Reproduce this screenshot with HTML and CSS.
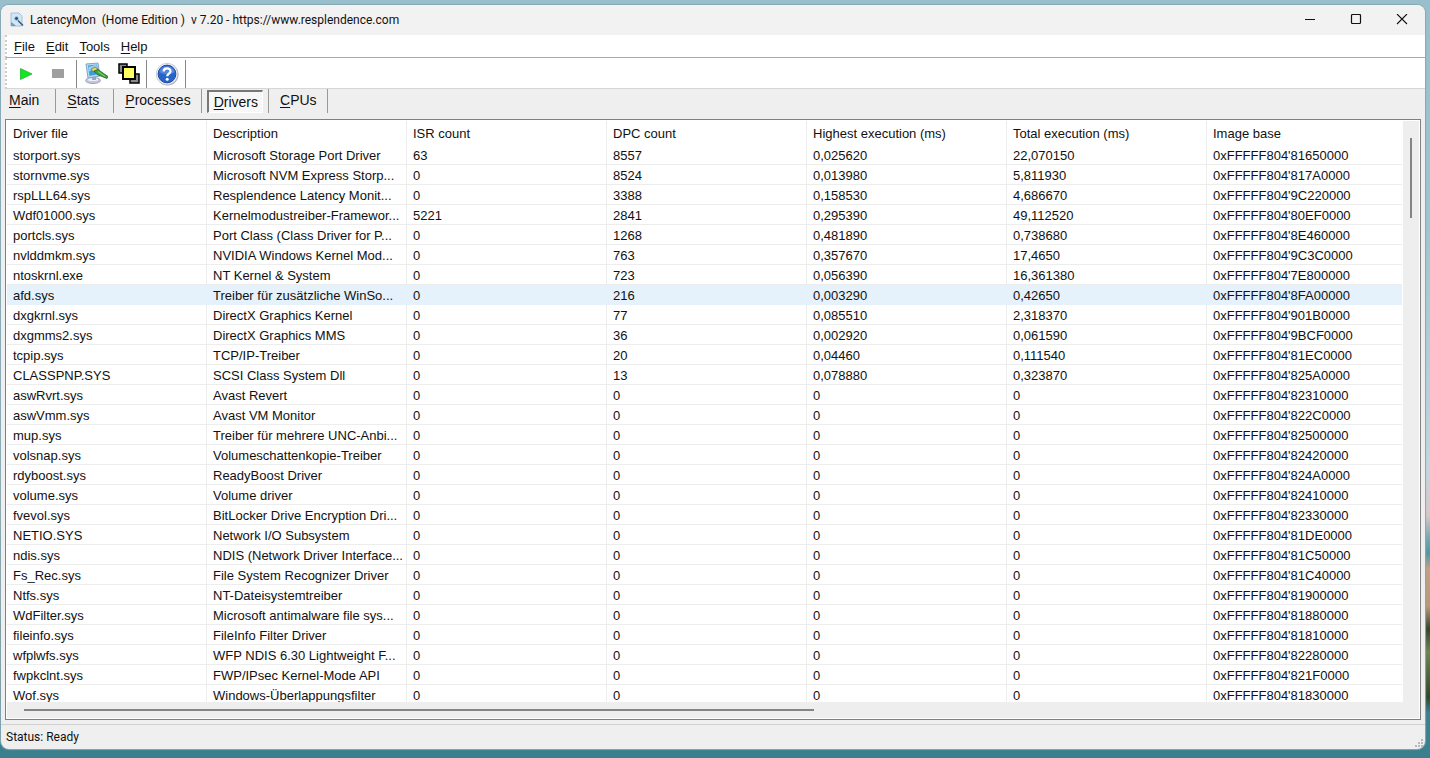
FILE: index.html
```html
<!DOCTYPE html>
<html lang="en">
<head>
<meta charset="utf-8">
<title>LatencyMon</title>
<link rel="stylesheet" href="styles.css">
</head>
<body>
<main class="window">
  <header class="titlebar">
    <svg class="app-icon" width="16" height="16" viewBox="0 0 16 16" aria-hidden="true">
      <path d="M2 1h8l3 3v10H2z" fill="#d3e6f5" stroke="#a5c2da"/>
      <path d="M2 14V10l3 2 2 2z" fill="#6f9fc8"/>
      <circle cx="7.500" cy="6.500" r="2" fill="#2a5378" stroke="#b0cbe2"/>
      <path d="M9 8.500l5 5" stroke="#335b80" stroke-width="1.500"/>
    </svg>
    <h1 class="title">LatencyMon  (Home Edition )  v 7.20 - https://www.resplendence.com</h1>
    <div class="caption-buttons">
      <button class="caption-button" aria-label="Minimize"><svg width="12" height="12" viewBox="0 0 12 12"><path d="M1 5.500h10" stroke="#111"/></svg></button>
      <button class="caption-button" aria-label="Maximize"><svg width="12" height="12" viewBox="0 0 12 12"><rect x="1.500" y=".5" width="9" height="9" rx="1" fill="none" stroke="#111" stroke-width="1.200"/></svg></button>
      <button class="caption-button" aria-label="Close"><svg width="12" height="12" viewBox="0 0 12 12"><path d="M1 0l10 10M11 0L1 10" stroke="#111" stroke-width="1.100"/></svg></button>
    </div>
  </header>
  <nav class="menubar" aria-label="Menu">
    <button class="menu-item"><u>F</u>ile</button>
    <button class="menu-item"><u>E</u>dit</button>
    <button class="menu-item"><u>T</u>ools</button>
    <button class="menu-item"><u>H</u>elp</button>
  </nav>
  <div class="toolbar" role="toolbar" aria-label="Tools">
    <div class="tool-group">
      <button class="tool" aria-label="Start"><svg width="24" height="24" viewBox="0 0 24 24"><path d="M7.500 6.500v11L19 12z" fill="#10e820" stroke="#25b52e" stroke-width=".8"/></svg></button>
      <button class="tool" aria-label="Stop"><svg width="24" height="24" viewBox="0 0 24 24"><path d="M7 7h12v9H7z" fill="#9f9f9f"/></svg></button>
    </div>
    <div class="tool-group">
      <button class="tool" aria-label="Options"><svg width="24" height="24" viewBox="0 0 24 24">
        <ellipse cx="9" cy="18.500" rx="7.500" ry="3" fill="#c3c7dc" stroke="#a0a4be"/>
        <ellipse cx="9" cy="17.500" rx="5" ry="1.500" fill="#eff1fa"/>
        <path d="M8 14h4v4H8z" fill="#9ea5c5"/>
        <path d="M2 2l12-1 2 13-12 2z" fill="#b7dcf4" stroke="#86a4c2"/>
        <path d="M4 3.500l9-1 1.300 9.500-8.800 2z" fill="#3a9ce0"/>
        <path d="M4.500 5l8-2.500 .5 3-8 4z" fill="#8ed4fa"/>
        <path d="M7 7l4-2 4 3-3 2-4-1z" fill="#f2cf51" stroke="#5a6042" stroke-width=".6"/>
        <path d="M10 9l4-1.500 10 7-1 2-10-4z" fill="#3fa33f" stroke="#196b2b" stroke-width=".8"/>
        <path d="M14 9.500l7 5" stroke="#91d56f"/>
      </svg></button>
      <button class="tool" aria-label="Windows"><svg width="24" height="24" viewBox="0 0 24 24">
        <path d="M3 2h8v9H3zM14 12h9v9h-9z" fill="#898989" stroke="#000" stroke-width="1.500"/>
        <path d="M7 5h12v12H7z" fill="#ffff61" stroke="#000" stroke-width="2"/>
      </svg></button>
    </div>
    <div class="tool-group tool-group-help">
      <button class="tool" aria-label="Help"><svg width="24" height="24" viewBox="0 0 24 24">
        <circle cx="12.500" cy="12.500" r="11" fill="#aaa"/>
        <circle cx="12" cy="12" r="10.700" fill="#f3f5fb" stroke="#bbc0ce" stroke-width=".7"/>
        <circle cx="12" cy="12" r="8.900" fill="#2865c9" stroke="#1c4ba4"/>
        <path d="M4 10a8.500 8.500 0 0 1 16 0C15 13 9 13 4 10z" fill="#5487db"/>
        <path d="M8.700 9.500C8.700 5.500 15.500 5.500 15.500 9.200C15.500 11.500 12.200 11.700 12.200 14.200" fill="none" stroke="#fff" stroke-width="2.300"/>
        <circle cx="12.200" cy="17.200" r="1.500" fill="#fff"/>
      </svg></button>
    </div>
  </div>
  <nav class="tabs" aria-label="Views">
    <div class="tab-slot"><button class="tab tab-first"><u>M</u>ain</button></div>
    <div class="tab-slot"><button class="tab tab-stats"><u>S</u>tats</button></div>
    <div class="tab-slot"><button class="tab"><u>P</u>rocesses</button></div>
    <div class="tab-slot tab-slot-active"><button class="tab tab-active" aria-current="page"><u>D</u>rivers</button></div>
    <div class="tab-slot"><button class="tab"><u>C</u>PUs</button></div>
  </nav>
  <section class="list" aria-label="Drivers">
    <div class="viewport">
      <table class="drivers">
        <thead>
          <tr><th>Driver file</th><th>Description</th><th>ISR count</th><th>DPC count</th><th>Highest execution (ms)</th><th>Total execution (ms)</th><th>Image base</th></tr>
        </thead>
        <tbody>
          <tr><td>storport.sys</td><td>Microsoft Storage Port Driver</td><td>63</td><td>8557</td><td>0,025620</td><td>22,070150</td><td>0xFFFFF804'81650000</td></tr>
          <tr><td>stornvme.sys</td><td>Microsoft NVM Express Storp...</td><td>0</td><td>8524</td><td>0,013980</td><td>5,811930</td><td>0xFFFFF804'817A0000</td></tr>
          <tr><td>rspLLL64.sys</td><td>Resplendence Latency Monit...</td><td>0</td><td>3388</td><td>0,158530</td><td>4,686670</td><td>0xFFFFF804'9C220000</td></tr>
          <tr><td>Wdf01000.sys</td><td>Kernelmodustreiber-Framewor...</td><td>5221</td><td>2841</td><td>0,295390</td><td>49,112520</td><td>0xFFFFF804'80EF0000</td></tr>
          <tr><td>portcls.sys</td><td>Port Class (Class Driver for P...</td><td>0</td><td>1268</td><td>0,481890</td><td>0,738680</td><td>0xFFFFF804'8E460000</td></tr>
          <tr><td>nvlddmkm.sys</td><td>NVIDIA Windows Kernel Mod...</td><td>0</td><td>763</td><td>0,357670</td><td>17,4650</td><td>0xFFFFF804'9C3C0000</td></tr>
          <tr><td>ntoskrnl.exe</td><td>NT Kernel &amp; System</td><td>0</td><td>723</td><td>0,056390</td><td>16,361380</td><td>0xFFFFF804'7E800000</td></tr>
          <tr class="hovered"><td>afd.sys</td><td>Treiber für zusätzliche WinSo...</td><td>0</td><td>216</td><td>0,003290</td><td>0,42650</td><td>0xFFFFF804'8FA00000</td></tr>
          <tr><td>dxgkrnl.sys</td><td>DirectX Graphics Kernel</td><td>0</td><td>77</td><td>0,085510</td><td>2,318370</td><td>0xFFFFF804'901B0000</td></tr>
          <tr><td>dxgmms2.sys</td><td>DirectX Graphics MMS</td><td>0</td><td>36</td><td>0,002920</td><td>0,061590</td><td>0xFFFFF804'9BCF0000</td></tr>
          <tr><td>tcpip.sys</td><td>TCP/IP-Treiber</td><td>0</td><td>20</td><td>0,04460</td><td>0,111540</td><td>0xFFFFF804'81EC0000</td></tr>
          <tr><td>CLASSPNP.SYS</td><td>SCSI Class System Dll</td><td>0</td><td>13</td><td>0,078880</td><td>0,323870</td><td>0xFFFFF804'825A0000</td></tr>
          <tr><td>aswRvrt.sys</td><td>Avast Revert</td><td>0</td><td>0</td><td>0</td><td>0</td><td>0xFFFFF804'82310000</td></tr>
          <tr><td>aswVmm.sys</td><td>Avast VM Monitor</td><td>0</td><td>0</td><td>0</td><td>0</td><td>0xFFFFF804'822C0000</td></tr>
          <tr><td>mup.sys</td><td>Treiber für mehrere UNC-Anbi...</td><td>0</td><td>0</td><td>0</td><td>0</td><td>0xFFFFF804'82500000</td></tr>
          <tr><td>volsnap.sys</td><td>Volumeschattenkopie-Treiber</td><td>0</td><td>0</td><td>0</td><td>0</td><td>0xFFFFF804'82420000</td></tr>
          <tr><td>rdyboost.sys</td><td>ReadyBoost Driver</td><td>0</td><td>0</td><td>0</td><td>0</td><td>0xFFFFF804'824A0000</td></tr>
          <tr><td>volume.sys</td><td>Volume driver</td><td>0</td><td>0</td><td>0</td><td>0</td><td>0xFFFFF804'82410000</td></tr>
          <tr><td>fvevol.sys</td><td>BitLocker Drive Encryption Dri...</td><td>0</td><td>0</td><td>0</td><td>0</td><td>0xFFFFF804'82330000</td></tr>
          <tr><td>NETIO.SYS</td><td>Network I/O Subsystem</td><td>0</td><td>0</td><td>0</td><td>0</td><td>0xFFFFF804'81DE0000</td></tr>
          <tr><td>ndis.sys</td><td>NDIS (Network Driver Interface...</td><td>0</td><td>0</td><td>0</td><td>0</td><td>0xFFFFF804'81C50000</td></tr>
          <tr><td>Fs_Rec.sys</td><td>File System Recognizer Driver</td><td>0</td><td>0</td><td>0</td><td>0</td><td>0xFFFFF804'81C40000</td></tr>
          <tr><td>Ntfs.sys</td><td>NT-Dateisystemtreiber</td><td>0</td><td>0</td><td>0</td><td>0</td><td>0xFFFFF804'81900000</td></tr>
          <tr><td>WdFilter.sys</td><td>Microsoft antimalware file sys...</td><td>0</td><td>0</td><td>0</td><td>0</td><td>0xFFFFF804'81880000</td></tr>
          <tr><td>fileinfo.sys</td><td>FileInfo Filter Driver</td><td>0</td><td>0</td><td>0</td><td>0</td><td>0xFFFFF804'81810000</td></tr>
          <tr><td>wfplwfs.sys</td><td>WFP NDIS 6.30 Lightweight F...</td><td>0</td><td>0</td><td>0</td><td>0</td><td>0xFFFFF804'82280000</td></tr>
          <tr><td>fwpkclnt.sys</td><td>FWP/IPsec Kernel-Mode API</td><td>0</td><td>0</td><td>0</td><td>0</td><td>0xFFFFF804'821F0000</td></tr>
          <tr><td>Wof.sys</td><td>Windows-Überlappungsfilter</td><td>0</td><td>0</td><td>0</td><td>0</td><td>0xFFFFF804'81830000</td></tr>
        </tbody>
      </table>
    </div>
    <div class="scroll-vertical"><div class="thumb-vertical"></div></div>
    <div class="scroll-horizontal"><div class="thumb-horizontal"></div></div>
  </section>
  <footer class="statusbar">
    <span>Status: Ready</span>
    <svg class="size-grip" width="9" height="9" viewBox="0 0 9 9" aria-hidden="true"><path d="M6 0h2v2H6zM3 3h2v2H3zM6 3h2v2H6zM0 6h2v2H0zM3 6h2v2H3zM6 6h2v2H6z" fill="#b9b9b9"/></svg>
  </footer>
</main>
</body>
</html>
```
FILE: styles.css
```css
* {
  box-sizing: border-box;
}

body {
  margin: 0;
  height: 100vh;
  display: flex;
  padding: 5px 5px 9px 1px;
  background: linear-gradient(#98bfcb 0%, #a0c5d0 30%, #c5d6de 62%, #d9c6c8 68%, #78a8b2 71%, #4f98a2 73%, #c3a184 75%, #b99778 80%, #35452c 83%, #6f8450 86%, #32452b 92%, #3b8190 94%, #3a7f8e 100%);
  font-family: "Liberation Sans", Arial, sans-serif;
  font-size: 13px;
  color: #111;
}

button {
  margin: 0;
  padding: 0;
  border: 0;
  background: none;
  font: inherit;
  color: inherit;
}

u {
  text-underline-offset: 2px;
}

.window {
  flex: 1;
  min-width: 0;
  display: flex;
  flex-direction: column;
  overflow: hidden;
  border-radius: 8px;
  background: #efefef;
  box-shadow: 0 0 1px 1px #86a8b2;
}

.titlebar {
  flex: none;
  display: flex;
  align-items: center;
  gap: 5px;
  height: 30px;
  padding-left: 8px;
  background: #f2f2f2;
}

.title {
  flex: 1;
  margin: 0;
  font: 400 12px Roboto, "Open Sans", sans-serif;
  white-space: pre;
}

.caption-buttons {
  display: flex;
  height: 100%;
}

.caption-button {
  display: grid;
  place-items: center;
  width: 46px;
}

.menubar {
  flex: none;
  display: flex;
  align-items: center;
  gap: 11px;
  height: 23px;
  margin-left: 4px;
  padding-left: 7px;
  border-left: 2px dotted #ccc;
  border-bottom: 1px solid #aaa;
}

.menubar,
.toolbar {
  background: #fff;
}

.toolbar {
  flex: none;
  display: flex;
  height: 31px;
  margin-left: 4px;
  border-left: 2px dotted #ccc;
  border-bottom: 1px solid #d6d6d6;
}

.tool-group {
  display: flex;
  align-items: center;
  gap: 8px;
  margin-top: 2px;
  padding: 0 6px 0 7px;
  border-right: 1px solid #888;
}

.tool-group:first-child {
  padding-left: 6px;
  padding-right: 7px;
}

.tool-group-help {
  padding-left: 8px;
}

.tool {
  display: grid;
}

.tabs {
  flex: none;
  display: flex;
  height: 30px;
  padding-bottom: 6px;
  font-size: 14px;
}

.tab-slot {
  display: flex;
  border-right: 1px solid #999;
}

.tab {
  padding: 0 10px 2px 11px;
}

.tab-first {
  padding: 0 16px 2px 8px;
}

.tab-stats {
  padding-right: 14px;
}

.tab-slot-active {
  padding: 1px 5px 0;
}

.tab-active {
  padding: 0 4px 1px 5px;
  border: 1px solid #fff;
  border-top: 2px solid #777;
  border-left: 2px solid #777;
  background: #f7f7f7;
}

.list {
  flex: 1;
  min-height: 0;
  display: grid;
  grid-template: minmax(0, 1fr) 16px / minmax(0, 1fr) 16px;
  margin: 0 4px;
  padding: 1px;
  border: 1px solid #808080;
  background: #fff;
}

.viewport {
  overflow: hidden;
  padding-right: 1px;
}

.drivers {
  width: 100%;
  table-layout: fixed;
  border-collapse: separate;
  border-spacing: 0;
}

.drivers th,
.drivers td {
  height: 20px;
  padding: 0 0 0 6px;
  border-right: 1px solid #ededed;
  line-height: 19px;
  font-weight: 400;
  text-align: left;
  white-space: nowrap;
  overflow: hidden;
}

.drivers td {
  border-bottom: 1px solid #ededed;
}

.drivers th {
  width: 200px;
  height: 24px;
}

.drivers tbody td {
  padding-top: 2px;
  line-height: 17px;
}

.drivers th:last-child {
  width: auto;
}

.drivers th:last-child,
.drivers td:last-child {
  border-right: 0;
}

.drivers .hovered td {
  border-color: #e5f1fb;
  background: #e5f1fb;
}

.scroll-vertical {
  grid-row: 1 / 3;
  grid-column: 2;
  padding: 17px 7px 0;
  background: #eee;
}

.thumb-vertical {
  width: 2px;
  height: 80px;
  background: #858585;
}

.scroll-horizontal {
  padding: 7px 17px 0;
  background: #eee;
}

.thumb-horizontal {
  width: 58%;
  height: 2px;
  background: #858585;
}

.statusbar {
  flex: none;
  display: flex;
  align-items: center;
  justify-content: space-between;
  height: 25px;
  margin-top: 4px;
  padding-left: 5px;
  border-top: 1px solid #d2d2d2;
  font: 12px Roboto, "Open Sans", sans-serif;
}

.size-grip {
  align-self: flex-end;
  margin: 0 1px 1px 0;
}
```
